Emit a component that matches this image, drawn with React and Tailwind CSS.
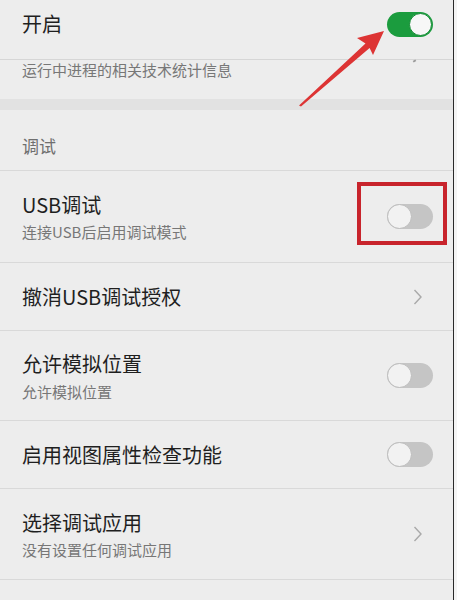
import React from "react";

const font = { fontFamily: '"Noto Sans CJK SC", "Noto Sans", sans-serif' };

function Toggle({ on }) {
  if (on) {
    return (
      <div className="relative w-[46px] h-[25px] rounded-full bg-[#1b9c3e] shrink-0">
        <div className="absolute right-[1px] top-[1px] w-[23px] h-[23px] rounded-full bg-[#f7f7f7] border border-[#138a33]" />
      </div>
    );
  }
  return (
    <div className="relative w-[46px] h-[25px] rounded-full bg-[#c5c5c5] shrink-0">
      <div className="absolute left-0 top-0 w-[25px] h-[25px] rounded-full bg-[#f2f2f2] border border-[#bdbdbd]" />
    </div>
  );
}

function Chevron() {
  return (
    <svg width="10" height="16" viewBox="0 0 10 16" className="mr-[10px] shrink-0">
      <polyline points="1.5,1 8,8 1.5,15" fill="none" stroke="#a9a9a9" strokeWidth="1.4" />
    </svg>
  );
}

function Row({ h, title, sub, gap, right }) {
  return (
    <div className={`flex items-center justify-between pl-[22px] pr-[20px] border-b border-[#d9d9d9] ${h}`}>
      <div className={`flex flex-col ${gap}`}>
        <div className="text-[20px] leading-[28px] text-[#1f1f1f]">{title}</div>
        {sub && <div className="text-[15px] leading-[20px] text-[#777777]">{sub}</div>}
      </div>
      {right}
    </div>
  );
}

export default function App() {
  return (
    <div className="relative flex w-[457px] h-[600px] overflow-hidden bg-[#f3f3f3]" style={font}>
      <div className="flex flex-col w-[453px] bg-[#ededed]">
        <div className="flex items-start justify-between pl-[22px] pr-[20px] pt-[10px] h-[60px] border-b border-[#d6d6d6]">
          <div className="text-[20px] leading-[28px] text-[#1f1f1f]">开启</div>
          <div className="pt-[2px]">
            <Toggle on />
          </div>
        </div>
        <div className="h-[39px] pl-[22px] text-[15px] leading-[20px] text-[#777777]">运行中进程的相关技术统计信息</div>
        <div className="h-[11px] bg-[#e2e2e2]" />
        <div className="h-[61px] pl-[22px] pt-[24px] text-[17px] leading-[24px] text-[#6f6f6f] border-b border-[#d9d9d9]">调试</div>
        <Row h="h-[92px]" gap="gap-[3px]" title="USB调试" sub="连接USB后启用调试模式" right={<Toggle />} />
        <Row h="h-[68px]" title="撤消USB调试授权" right={<Chevron />} />
        <Row h="h-[90px]" gap="gap-[4px]" title="允许模拟位置" sub="允许模拟位置" right={<Toggle />} />
        <Row h="h-[68px]" title="启用视图属性检查功能" right={<Toggle />} />
        <Row h="h-[91px]" gap="gap-[3px]" title="选择调试应用" sub="没有设置任何调试应用" right={<Chevron />} />
        <div className="flex-1" />
      </div>
      <div className="w-[1px] bg-[#2a2a2a]" />
      <div className="flex-1 bg-[#f4f4f4]" />

      <div className="absolute left-[413px] top-[60px] w-[3px] h-[2px] bg-[#9a9a9a] rotate-[-30deg]" />

      <div className="absolute left-[357px] top-[182px] w-[90px] h-[63px] border-4 border-[#c8242c]" />

      <svg className="absolute left-0 top-0" width="457" height="120" viewBox="0 0 457 120">
        <polygon
          points="384,31 357,38 365.5,43.5 299,105.5 301,106.5 369.6,48 373,55"
          fill="#dd3434"
        />
      </svg>
    </div>
  );
}
